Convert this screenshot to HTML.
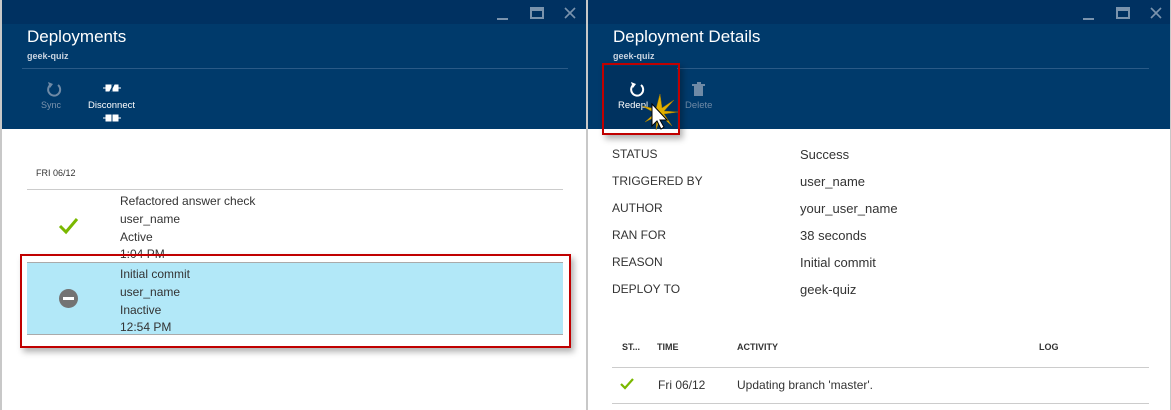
<!DOCTYPE html>
<html><head><style>
*{margin:0;padding:0;box-sizing:border-box}
body{width:1171px;height:410px;background:#fff;font-family:"Liberation Sans",sans-serif;position:relative;overflow:hidden;color:#333}
.abs{position:absolute}
.panel{position:absolute;top:0;height:410px;border-left:2px solid #c8c8c8;border-right:1px solid #c8c8c8;background:#fff}
.top{position:absolute;left:0;right:0;top:0;height:24px;background:#003161}
.hdr{position:absolute;left:0;right:0;top:24px;height:105px;background:#003a6b}
.title{position:absolute;left:25px;top:27px;color:#fff;font-size:17px}
.sub{position:absolute;left:25px;top:51px;color:#c9d4e0;font-size:9px;font-weight:bold}
.sep{position:absolute;left:20px;top:68px;height:1px;background:#2a5a87}
.lbl{font-size:12px;color:#333;position:absolute}
</style></head><body>

<div class="panel" style="left:0;width:587px">
 <div class="top"></div><div class="hdr"></div>
 <svg class="abs" style="left:495px;top:5px" width="90" height="16"><line x1="0" y1="14" x2="11" y2="14" stroke="#7a93ad" stroke-width="2"/><rect x="34" y="3" width="12" height="10" fill="none" stroke="#7a93ad" stroke-width="2"/><rect x="34" y="3" width="12" height="3" fill="#7a93ad"/><path d="M68 3L78 13M78 3L68 13" stroke="#7a93ad" stroke-width="1.6"/></svg>
 <div class="title">Deployments</div>
 <div class="sub">geek-quiz</div>
 <div class="sep" style="width:546px"></div>
 <svg class="abs" style="left:43px;top:80px" width="18" height="18"><path d="M13 5A6 6 0 1 1 6 4.5" fill="none" stroke="#6f8aa6" stroke-width="2"/><path d="M3 2L8 4L5 8Z" fill="#6f8aa6"/></svg>
 <div class="abs" style="left:39px;top:100px;font-size:9px;color:#7a93ad">Sync</div>
 <svg class="abs" style="left:101px;top:84px" width="18" height="8"><path d="M0 4h3M3 1h5v6H3z M10 1h5v6h-5z M15 4h3" fill="#fff" stroke="#fff"/><path d="M7 8L11 0" stroke="#003a6b" stroke-width="1.5"/></svg>
 <div class="abs" style="left:86px;top:100px;font-size:9.5px;color:#fff">Disconnect</div>
 <svg class="abs" style="left:101px;top:114px" width="18" height="8"><path d="M0 4h3M3 1h5v6H3z M10 1h5v6h-5z M15 4h3" fill="#fff" stroke="#fff"/></svg>
 <div class="abs" style="left:34px;top:168px;font-size:9px;color:#333">FRI 06/12</div>
 <div class="abs" style="left:25px;top:189px;width:536px;height:1px;background:#ccc"></div>
 <svg class="abs" style="left:56px;top:217px" width="22" height="18"><path d="M2 9L8 15L19 2" fill="none" stroke="#7ab800" stroke-width="3"/></svg>
 <div class="lbl" style="left:118px;top:194px">Refactored answer check</div>
 <div class="lbl" style="left:118px;top:212px">user_name</div>
 <div class="lbl" style="left:118px;top:230px">Active</div>
 <div class="lbl" style="left:118px;top:247px">1:04 PM</div>
 <div class="abs" style="left:25px;top:262px;width:536px;height:73px;background:#b2e8f8;border-top:1px solid #aaa;border-bottom:1px solid #aaa"></div>
 <div class="abs" style="left:57px;top:289px;width:19px;height:19px;border-radius:50%;background:#737373"></div>
 <div class="abs" style="left:61px;top:297px;width:11px;height:3px;background:#fff"></div>
 <div class="lbl" style="left:118px;top:267px">Initial commit</div>
 <div class="lbl" style="left:118px;top:285px">user_name</div>
 <div class="lbl" style="left:118px;top:303px">Inactive</div>
 <div class="lbl" style="left:118px;top:320px">12:54 PM</div>
 <div class="abs" style="left:18px;top:254px;width:551px;height:94px;border:2px solid #c00000;box-shadow:3px 4px 6px rgba(0,0,0,.3)"></div>
</div>

<div class="panel" style="left:586px;width:585px">
 <div class="top"></div><div class="hdr"></div>
 <svg class="abs" style="left:495px;top:5px" width="90" height="16"><line x1="0" y1="14" x2="11" y2="14" stroke="#7a93ad" stroke-width="2"/><rect x="34" y="3" width="12" height="10" fill="none" stroke="#7a93ad" stroke-width="2"/><rect x="34" y="3" width="12" height="3" fill="#7a93ad"/><path d="M68 3L78 13M78 3L68 13" stroke="#7a93ad" stroke-width="1.6"/></svg>
 <div class="title">Deployment Details</div>
 <div class="sub">geek-quiz</div>
 <div class="sep" style="width:541px"></div>
 <div class="abs" style="left:15px;top:66px;width:74px;height:63px;background:#00325f"></div>
 <svg class="abs" style="left:40px;top:80px" width="18" height="18"><path d="M13 5A6 6 0 1 1 6 4.5" fill="none" stroke="#fff" stroke-width="2"/><path d="M3 2L8 4L5 8Z" fill="#fff"/></svg>
 <div class="abs" style="left:30px;top:100px;font-size:9.5px;color:#fff">Redepl</div>
 <svg class="abs" style="left:104px;top:82px" width="14" height="15"><rect x="2" y="4" width="9" height="10" fill="#6f8aa6"/><rect x="0" y="2" width="13" height="2" fill="#6f8aa6"/><rect x="5" y="0" width="4" height="2" fill="#6f8aa6"/></svg>
 <div class="abs" style="left:97px;top:100px;font-size:9.5px;color:#6f8aa6">Delete</div>
 <svg class="abs" style="left:52px;top:92px" width="40" height="40"><path d="M20 2L22 16L34 8L24 19L38 20L24 22L32 34L21 24L16 38L17 24L5 30L15 21L2 14L16 17Z" fill="#e0b000" stroke="#a07800" stroke-width=".5"/><path d="M12 12L12 34L17 29L21 37L24 35L20 28L27 28Z" fill="#fff" stroke="#000" stroke-width="1"/></svg>
 <div class="abs" style="left:14px;top:63px;width:78px;height:72px;border:2px solid #c00000;box-shadow:3px 4px 6px rgba(0,0,0,.3)"></div>
 <div class="lbl" style="left:24px;top:147px">STATUS</div><div class="lbl" style="left:212px;top:147px;font-size:13px">Success</div>
 <div class="lbl" style="left:24px;top:174px">TRIGGERED BY</div><div class="lbl" style="left:212px;top:174px;font-size:13px">user_name</div>
 <div class="lbl" style="left:24px;top:201px">AUTHOR</div><div class="lbl" style="left:212px;top:201px;font-size:13px">your_user_name</div>
 <div class="lbl" style="left:24px;top:228px">RAN FOR</div><div class="lbl" style="left:212px;top:228px;font-size:13px">38 seconds</div>
 <div class="lbl" style="left:24px;top:255px">REASON</div><div class="lbl" style="left:212px;top:255px;font-size:13px">Initial commit</div>
 <div class="lbl" style="left:24px;top:282px">DEPLOY TO</div><div class="lbl" style="left:212px;top:282px;font-size:13px">geek-quiz</div>
 <div class="abs" style="left:34px;top:342px;font-size:9px;font-weight:bold">ST...</div>
 <div class="abs" style="left:69px;top:342px;font-size:9px;font-weight:bold">TIME</div>
 <div class="abs" style="left:149px;top:342px;font-size:9px;font-weight:bold">ACTIVITY</div>
 <div class="abs" style="left:451px;top:342px;font-size:9px;font-weight:bold">LOG</div>
 <div class="abs" style="left:24px;top:367px;width:537px;height:1px;background:#ccc"></div>
 <svg class="abs" style="left:32px;top:378px" width="14" height="12"><path d="M1 6L5 10L13 1" fill="none" stroke="#7ab800" stroke-width="2.2"/></svg>
 <div class="lbl" style="left:70px;top:378px">Fri 06/12</div>
 <div class="lbl" style="left:149px;top:378px">Updating branch 'master'.</div>
 <div class="abs" style="left:24px;top:403px;width:537px;height:1px;background:#ccc"></div>
</div>
</body></html>
